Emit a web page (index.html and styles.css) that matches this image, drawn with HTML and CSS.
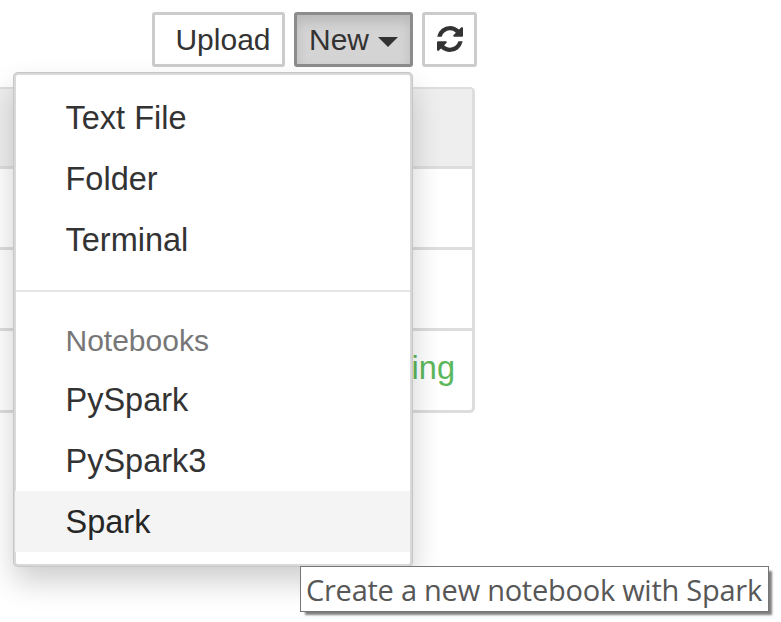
FILE: index.html
```html
<!DOCTYPE html>
<html lang="en">
<head>
<meta charset="utf-8">
<title>Notebook list</title>
<link rel="stylesheet" href="styles.css">
</head>
<body>
<div class="toolbar">
  <button class="btn upload">Upload</button>
  <div class="new-group">
    <button class="btn new">New<span class="caret"></span></button>
    <div class="menu">
      <div class="item">Text File</div>
      <div class="item">Folder</div>
      <div class="item">Terminal</div>
      <div class="divider"></div>
      <div class="heading">Notebooks</div>
      <div class="item kernel">PySpark</div>
      <div class="item kernel">PySpark3</div>
      <div class="item kernel active">Spark</div>
    </div>
  </div>
  <button class="btn refresh" aria-label="Refresh"><svg width="26" height="26" viewBox="0 0 1536 1536"><path fill="#333" d="M1511 928q0 5-1 7-64 268-268 434.500T764 1536q-146 0-282.500-55T238 1324l-129 129q-19 19-45 19t-45-19-19-45V960q0-26 19-45t45-19h448q26 0 45 19t19 45-19 45l-137 137q71 66 161 102t187 36q134 0 250-65t186-179q11-17 53-117 8-23 30-23h192q13 0 22.500 9.500t9.500 22.500zm25-800v448q0 26-19 45t-45 19h-448q-26 0-45-19t-19-45 19-45l138-138Q969 256 768 256q-134 0-250 65T332 500q-11 17-53 117-8 23-30 23H50q-13 0-22.500-9.500T18 608v-7q65-268 270-434.500T768 0q146 0 284 55.500T1297 212l130-129q19-19 45-19t45 19 19 45z"/></svg></button>
</div>
<div class="list">
  <div class="row header"></div>
  <div class="row"></div>
  <div class="row"></div>
  <div class="row last">Running</div>
</div>
<div class="tooltip">Create a new notebook with Spark</div>
</body>
</html>
```
FILE: styles.css
```css
* { box-sizing: border-box; }
body {
  margin: 0;
  width: 781px;
  height: 622px;
  overflow: hidden;
  position: relative;
  background: #fff;
  color: #333;
  font-family: "Liberation Sans", Arial, sans-serif;
}
.toolbar {
  display: flex;
  justify-content: flex-end;
  gap: 9px;
  width: 477px;
  padding-top: 12px;
}
.btn {
  display: block;
  height: 55px;
  margin: 0;
  padding: 0;
  border: 3px solid #ccc;
  border-radius: 3px;
  background: #fff;
  color: #333;
  font: 30px/49px "Liberation Sans", Arial, sans-serif;
}
.upload { width: 133px; padding-left: 9px; }
.new-group { position: relative; }
.new {
  display: flex;
  align-items: center;
  width: 119px;
  padding-left: 12px;
  border-color: #8c8c8c;
  background: #d4d4d4;
  box-shadow: inset 0 7px 12px rgba(0, 0, 0, .125);
}
.caret {
  margin: 4px 0 0 9px;
  border-top: 10px solid #333;
  border-left: 10px solid transparent;
  border-right: 10px solid transparent;
}
.refresh { display: flex; align-items: center; justify-content: center; width: 55px; }
.refresh svg { margin-top: -1px; }
.menu {
  position: absolute;
  z-index: 2;
  top: 61px;
  right: 1px;
  width: 398px;
  height: 493px;
  padding: 13px 0 12px;
  border: 2px solid #d9d9d9;
  border-radius: 4px;
  background: #fff;
  box-shadow: 0 0 0 1px #c6c6c6, 0 15px 30px rgba(0, 0, 0, .2);
}
.item {
  height: 61px;
  padding-left: 49.5px;
  font-size: 32.5px;
  line-height: 61px;
}
.item.kernel { line-height: 63px; }
.item.active { margin-left: -1px; padding-left: 50.5px; background: #f4f4f4; color: #262626; }
.divider { height: 2px; margin: 19px 0; background: #e5e5e5; }
.heading {
  height: 58px;
  padding-left: 49.5px;
  color: #777;
  font-size: 30px;
  line-height: 60px;
}
.list {
  width: 475px;
  height: 326px;
  margin-top: 20px;
  border: solid #ddd;
  border-width: 2px 3px 3px 0;
  border-radius: 0 5px 5px 0;
  overflow: hidden;
}
.row { height: 81px; border-bottom: 3px solid #ddd; }
.row.header { height: 80px; background: #eee; }
.row.last {
  border: 0;
  padding-right: 17px;
  color: #5cb85c;
  font-size: 32.5px;
  line-height: 74px;
  text-align: right;
}
.tooltip {
  position: absolute;
  z-index: 3;
  left: 300px;
  top: 566px;
  width: 469px;
  height: 46px;
  padding-left: 5px;
  border: 1px solid #767676;
  background: #fff;
  box-shadow: 4px 4px 2px -1px rgba(0, 0, 0, .5);
  color: #575757;
  font: 29px/46px "Open Sans", "Noto Sans", sans-serif;
  letter-spacing: -.25px;
  white-space: nowrap;
}
```
